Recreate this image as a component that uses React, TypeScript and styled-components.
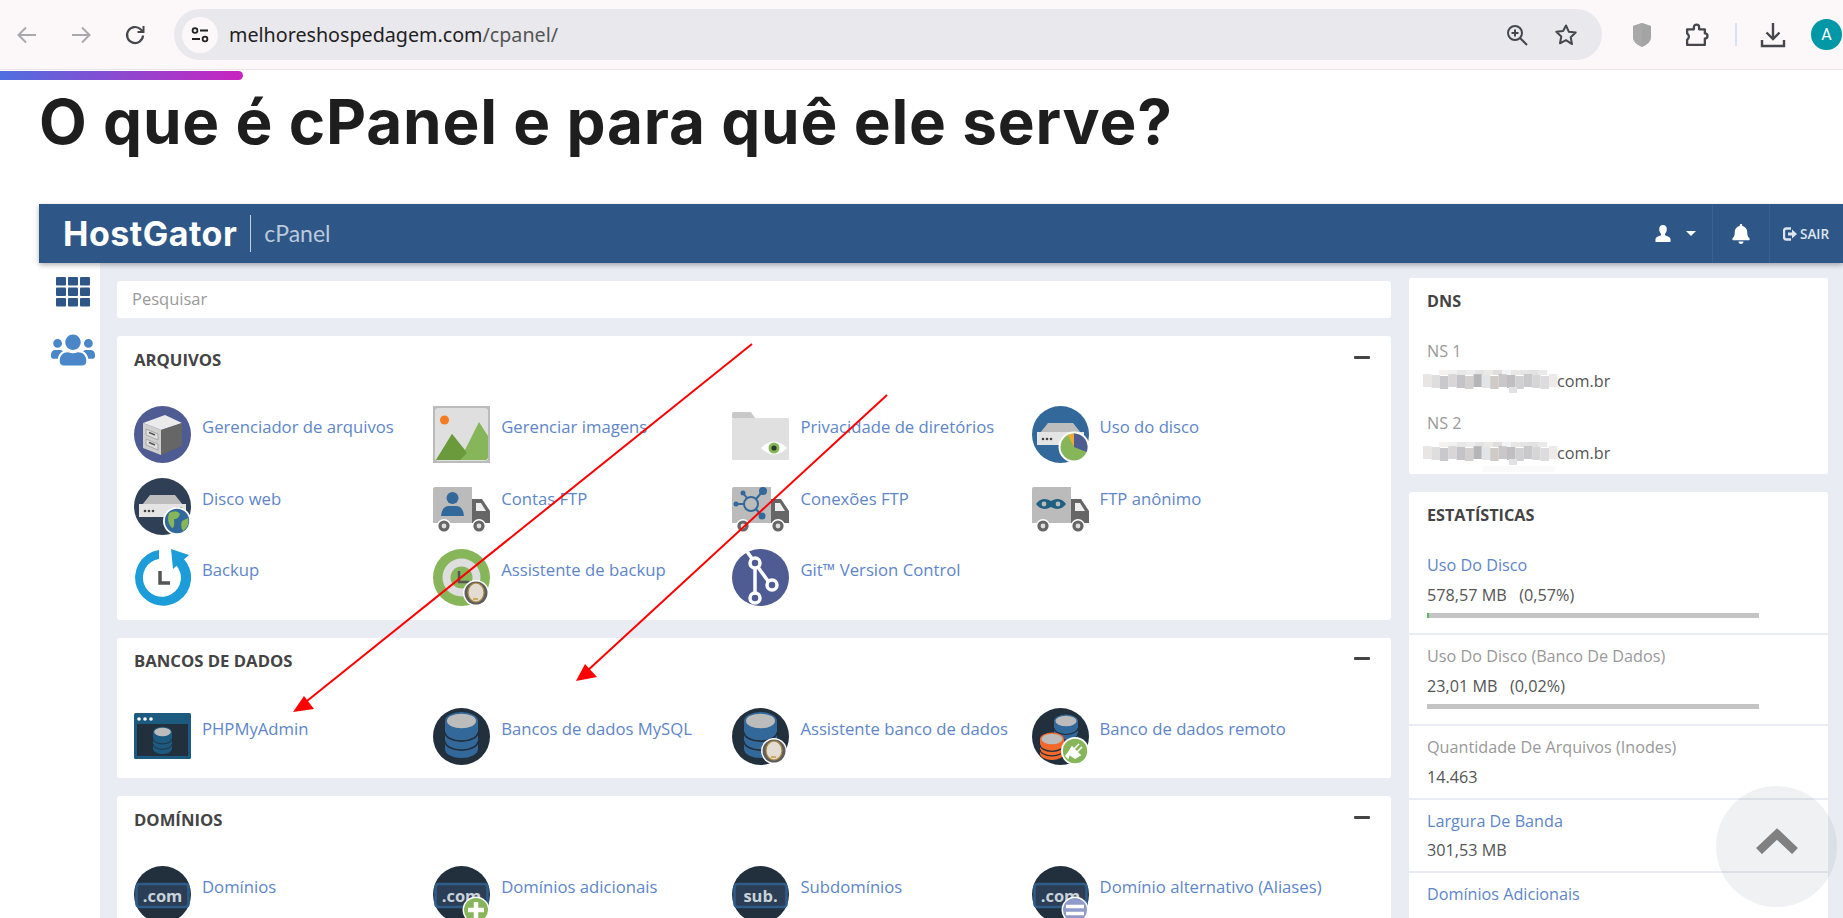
import React from "react";
import styled, { createGlobalStyle } from "styled-components";
import { FaUsers, FaBell } from "react-icons/fa";

const GlobalStyle = createGlobalStyle`
  html, body {
    margin: 0;
    padding: 0;
    background: #fff;
    font-family: "Open Sans", "Liberation Sans", sans-serif;
  }
`;

const DARK = "#222f3c";
const BLUE = "#33689a";
const NAVY = "#2e5788";
const PURPLE = "#4f5b93";
const GREEN = "#87b55a";

/* ---------- small drawing helpers for the cPanel icons ---------- */

type DbProps = { x: number; y: number; w: number; h: number; color?: string; top?: string; line?: string };

const Db = ({ x, y, w, h, color = BLUE, top = "#bcbcbc", line = DARK }: DbProps) => {
  const ry = w * 0.27;
  const b = y + h - ry;
  const s1 = y + (h - ry) * 0.4;
  const s2 = y + (h - ry) * 0.72;
  return (
    <g>
      <path d={`M${x} ${y}V${b}A${w / 2} ${ry} 0 0 0 ${x + w} ${b}V${y}Z`} fill={color} />
      <path d={`M${x} ${s1}A${w / 2} ${ry} 0 0 0 ${x + w} ${s1}`} fill="none" stroke={line} strokeWidth={w * 0.05} />
      <path d={`M${x} ${s2}A${w / 2} ${ry} 0 0 0 ${x + w} ${s2}`} fill="none" stroke={line} strokeWidth={w * 0.05} />
      <ellipse cx={x + w / 2} cy={y} rx={w / 2} ry={ry} fill={color} />
      <ellipse cx={x + w / 2} cy={y} rx={w / 2 - w * 0.06} ry={ry - w * 0.05} fill={top} />
    </g>
  );
};

const Server = () => (
  <g>
    <path d="M8 27 16 17H41L49 27Z" fill="#bdbdbd" />
    <rect x="5" y="26" width="47" height="13" fill="#e4e4e4" />
    <circle cx="11" cy="33" r="1.3" fill="#444" />
    <circle cx="15" cy="33" r="1.3" fill="#444" />
    <circle cx="19" cy="33" r="1.3" fill="#444" />
    <circle cx="43" cy="30" r="1.3" fill="#d9534f" />
    <circle cx="47" cy="30" r="1.3" fill={GREEN} />
  </g>
);

const Headset = ({ cx, cy, r = 12 }: { cx: number; cy: number; r?: number }) => (
  <g>
    <circle cx={cx} cy={cy} r={r} fill="#fff" />
    <circle cx={cx} cy={cy} r={r - 1.5} fill="#5e5e5e" />
    <ellipse cx={cx} cy={cy - 0.5} rx={r - 5} ry={r - 3.5} fill="#e2dcd2" stroke="#b08a3c" strokeWidth="1.2" />
    <path d={`M${cx - 3} ${cy + 6}h5`} stroke="#c79a3a" strokeWidth="1.5" />
  </g>
);

const Truck = ({ children }: { children: React.ReactNode }) => (
  <g>
    <path d="M0 11a2 2 0 0 1 2-2H39V45H0Z" fill="#bbb" />
    <path d="M39 21H49L57 33V45H39Z" fill="#666" />
    <path d="M43 25H48L53 33H43Z" fill="#eee" />
    <circle cx="11" cy="48" r="7" fill="#fff" />
    <circle cx="11" cy="48" r="5.6" fill="#666" />
    <circle cx="11" cy="48" r="2.4" fill="#ddd" />
    <circle cx="46" cy="48" r="7" fill="#fff" />
    <circle cx="46" cy="48" r="5.6" fill="#666" />
    <circle cx="46" cy="48" r="2.4" fill="#ddd" />
    {children}
  </g>
);

const Com = ({ label = ".com" }: { label?: string }) => (
  <g>
    <circle cx="28.5" cy="28.5" r="28.5" fill={DARK} />
    <rect x="2.5" y="18" width="52" height="23" rx="3" fill="#2b3e55" stroke="#2f5d8a" strokeWidth="2.5" />
    <text x="28.5" y="35.5" textAnchor="middle" fontFamily="'Open Sans', sans-serif" fontWeight="700" fontSize="16.5" fill="#c9d2da">
      {label}
    </text>
  </g>
);

const icons: Record<string, React.ReactNode> = {
  files: (
    <>
      <circle cx="28.5" cy="28.5" r="28.5" fill={PURPLE} />
      <path d="M9 17 31 9 48 17 27 24Z" fill="#eaeaea" />
      <path d="M9 17 27 24V49L9 42Z" fill="#cfcfcf" />
      <path d="M27 24 48 17V40L27 49Z" fill="#666" />
      <path d="M12 23 24 28V34L12 29ZM12 33 24 38V44L12 39Z" fill="#e0e0e0" stroke="#a8a8a8" />
      <path d="M15 26.5 21 29M15 36.5 21 39" stroke="#555" strokeWidth="1.4" />
    </>
  ),
  images: (
    <>
      <rect width="57" height="57" fill="#bbb" />
      <rect x="2" y="2" width="53" height="53" rx="3" fill="#dfdfdf" />
      <circle cx="11.5" cy="14" r="4.5" fill="#f47b20" />
      <path d="M3 54 19 28 32 44 46 16 55 30V52L53 54Z" fill={GREEN} />
      <path d="M3 54 19 28 34 47 27 54Z" fill="#6b9a3c" />
    </>
  ),
  folder: (
    <>
      <path d="M0 8a2 2 0 0 1 2-2H19L23 12H0Z" fill="#c9c9c9" />
      <rect y="12" width="57" height="42" rx="1.5" fill="#e0e0e0" />
      <path d="M29 42Q42 29 55 42 42 55 29 42Z" fill="#fff" />
      <circle cx="42" cy="42" r="5.5" fill={GREEN} />
      <circle cx="42" cy="42" r="2.6" fill="#2d3a28" />
    </>
  ),
  disk: (
    <>
      <circle cx="28.5" cy="28.5" r="28.5" fill={BLUE} />
      <Server />
      <circle cx="42" cy="41" r="15.5" fill="#fff" />
      <circle cx="42" cy="41" r="13.5" fill={GREEN} />
      <path d="M42 41V27.5A13.5 13.5 0 0 1 54.5 46Z" fill={PURPLE} />
      <path d="M42 41 36 29A13.5 13.5 0 0 1 42 27.5Z" fill="#eea92f" />
    </>
  ),
  web: (
    <>
      <circle cx="28.5" cy="28.5" r="28.5" fill="#2f3f56" />
      <Server />
      <circle cx="43" cy="43" r="14" fill="#fff" />
      <circle cx="43" cy="43" r="12.2" fill={BLUE} />
      <path d="M35 35Q43 31 46 36 44 42 40 41 41 50 38 50 32 44 35 35ZM48 43 54 40Q56 48 49 53 46 48 48 43Z" fill={GREEN} />
    </>
  ),
  ftpUser: (
    <Truck>
      <circle cx="19.5" cy="20" r="6" fill={BLUE} />
      <path d="M8 38Q9 28 16 28H23Q30 28 31 38Z" fill={BLUE} />
    </Truck>
  ),
  ftpConn: (
    <Truck>
      <g fill="none" stroke={BLUE} strokeWidth="2">
        <circle cx="19" cy="26" r="7" />
        <path d="M12 26H5M24 21 30 14M24 31 29 37M15 20 11 15" />
      </g>
      <circle cx="4" cy="26" r="2.5" fill={BLUE} />
      <circle cx="31" cy="13" r="4" fill={BLUE} />
      <circle cx="30" cy="38" r="3.5" fill={BLUE} />
      <circle cx="11" cy="15" r="2.5" fill={BLUE} />
    </Truck>
  ),
  ftpAnon: (
    <Truck>
      <path d="M4 26Q10 18 19 23 28 18 34 26 28 34 19 29 10 34 4 26Z" fill="#1f5f7f" />
      <circle cx="12" cy="26" r="2.4" fill="#bbb" />
      <circle cx="26" cy="26" r="2.4" fill="#bbb" />
    </Truck>
  ),
  backup: (
    <>
      <path d="M25 1A28 28 0 1 0 49 9L42 16A19 19 0 1 1 25 10Z" fill="#1c9cd8" />
      <path d="M37 0 55 6 39 20Z" fill="#1c9cd8" />
      <path d="M26 22V34H36" fill="none" stroke="#555" strokeWidth="3.5" />
    </>
  ),
  backupWizard: (
    <>
      <circle cx="28.5" cy="28.5" r="28.5" fill={GREEN} />
      <circle cx="28.5" cy="28.5" r="19" fill="#dedede" />
      <circle cx="28.5" cy="28.5" r="11" fill={GREEN} />
      <path d="M26 22V33H36" fill="none" stroke="#555" strokeWidth="2.5" />
      <Headset cx={43} cy={44} r={13} />
    </>
  ),
  git: (
    <>
      <circle cx="28.5" cy="28.5" r="28.5" fill={PURPLE} />
      <path d="M14 1 23 14V46M23 14 36 32" fill="none" stroke="#fff" strokeWidth="3.5" />
      <circle cx="23" cy="14" r="5" fill={PURPLE} stroke="#fff" strokeWidth="3.5" />
      <circle cx="40" cy="36" r="5" fill={PURPLE} stroke="#fff" strokeWidth="3.5" />
      <circle cx="23" cy="49" r="5" fill={PURPLE} stroke="#fff" strokeWidth="3.5" />
    </>
  ),
  phpmyadmin: (
    <>
      <rect width="57" height="46" y="5" rx="1.5" fill="#1d5a80" />
      <circle cx="5" cy="11" r="1.8" fill="#fff" />
      <circle cx="11" cy="11" r="1.8" fill="#fff" />
      <circle cx="17" cy="11" r="1.8" fill="#fff" />
      <rect x="3" y="16" width="51" height="32" fill={DARK} />
      <Db x={19} y={24} w={19} h={22} color="#1d5a80" />
    </>
  ),
  mysql: (
    <>
      <circle cx="28.5" cy="28.5" r="28.5" fill={DARK} />
      <Db x={12} y={13} w={33} h={37} />
    </>
  ),
  dbWizard: (
    <>
      <circle cx="28.5" cy="28.5" r="28.5" fill={DARK} />
      <Db x={12} y={13} w={33} h={37} />
      <Headset cx={42} cy={43} r={13} />
    </>
  ),
  dbRemote: (
    <>
      <circle cx="28.5" cy="28.5" r="28.5" fill={DARK} />
      <Db x={22} y={13} w={24} h={24} />
      <Db x={8} y={31} w={24} h={21} color="#f2692a" />
      <circle cx="43" cy="43" r="14" fill="#fff" />
      <circle cx="43" cy="43" r="12.2" fill={GREEN} />
      <path d="M47 36 42 41M50 39 45 44M40 39 48 47 43 50 37 46 36 50 34 48 37 44Z" fill="#fff" stroke="#fff" strokeWidth="1.6" />
    </>
  ),
  dom: <Com />,
  domAdd: (
    <>
      <Com />
      <circle cx="43" cy="44" r="13.5" fill="#fff" />
      <circle cx="43" cy="44" r="12" fill={GREEN} />
      <path d="M43 36V52M35 44H51" stroke="#fff" strokeWidth="4.5" />
    </>
  ),
  domSub: <Com label="sub." />,
  domAlias: (
    <>
      <Com />
      <circle cx="43" cy="44" r="13.5" fill="#fff" />
      <circle cx="43" cy="44" r="12" fill="#8f9bc8" />
      <path d="M34 40.5H52M34 47.5H52" stroke="#fff" strokeWidth="3.5" />
    </>
  ),
};

const sections = [
  {
    title: "ARQUIVOS",
    items: [
      ["files", "Gerenciador de arquivos"],
      ["images", "Gerenciar imagens"],
      ["folder", "Privacidade de diretórios"],
      ["disk", "Uso do disco"],
      ["web", "Disco web"],
      ["ftpUser", "Contas FTP"],
      ["ftpConn", "Conexões FTP"],
      ["ftpAnon", "FTP anônimo"],
      ["backup", "Backup"],
      ["backupWizard", "Assistente de backup"],
      ["git", "Git™ Version Control"],
    ],
  },
  {
    title: "BANCOS DE DADOS",
    items: [
      ["phpmyadmin", "PHPMyAdmin"],
      ["mysql", "Bancos de dados MySQL"],
      ["dbWizard", "Assistente banco de dados"],
      ["dbRemote", "Banco de dados remoto"],
    ],
  },
  {
    title: "DOMÍNIOS",
    items: [
      ["dom", "Domínios"],
      ["domAdd", "Domínios adicionais"],
      ["domSub", "Subdomínios"],
      ["domAlias", "Domínio alternativo (Aliases)"],
    ],
  },
];

const stats = [
  { label: "Uso Do Disco", value: "578,57 MB\u00a0\u00a0 (0,57%)", link: true, bar: 0.57 },
  { label: "Uso Do Disco (Banco De Dados)", value: "23,01 MB\u00a0\u00a0 (0,02%)", bar: 0 },
  { label: "Quantidade De Arquivos (Inodes)", value: "14.463" },
  { label: "Largura De Banda", value: "301,53 MB", link: true },
  { label: "Domínios Adicionais", value: "3 / 40%", link: true },
];

// pixelated smear over the redacted name server host
const mosaic = [
  "e8e5e2", "dedede", "c9c9cc", "d8d6d6", "c4c4c8", "d2d0cf", "b5b5b8", "e2e4e8",
  "cfcac6", "c8c6c6", "bfbfc2", "d0d0d2", "c9c9cb", "d6d6d6", "dcdcde", "ecebea",
];

const Mosaic = ({ patch }: { patch?: boolean }) => (
  <BlurSvg width="134" height="26" viewBox="0 0 134 26">
    {mosaic.map((c, i) => (
      <rect key={i} x={i * 8.4} y={6 + (i % 3)} width="8.4" height="13" fill={`#${c}`} />
    ))}
    {mosaic.slice(0, 12).map((c, i) => (
      <rect key={i} x={16 + i * 9} y={2} width="9" height="5" fill={`#${c}`} opacity={0.45} />
    ))}
    <rect x="86" y="19" width="8" height="6" fill="#e2e2e4" />
    {patch && <rect x="60" y="26" width="72" height="6" fill="#fafafa" />}
  </BlurSvg>
);

const App = () => (
  <Page>
    <GlobalStyle />
    <Toolbar>
      <NavButton>
        <svg width="24" height="24" viewBox="0 0 24 24" fill="none" stroke="#a9a9ab" strokeWidth="2">
          <path d="M21 12H4M11 4.5 3.5 12l7.5 7.5" />
        </svg>
      </NavButton>
      <NavButton>
        <svg width="24" height="24" viewBox="0 0 24 24" fill="none" stroke="#a9a9ab" strokeWidth="2">
          <path d="M3 12h17M13 4.5l7.5 7.5-7.5 7.5" />
        </svg>
      </NavButton>
      <NavButton>
        <svg width="24" height="24" viewBox="0 0 24 24" fill="none" stroke="#45474c" strokeWidth="2.2">
          <path d="M20 12.5A8 8 0 1 1 17.6 6.3L20 8.5" />
          <path d="M20.5 3V9H14.5" strokeWidth="2" />
        </svg>
      </NavButton>
      <UrlPill>
        <TuneBadge>
          <svg width="20" height="20" viewBox="0 0 20 20" fill="none" stroke="#222" strokeWidth="1.8">
            <circle cx="5" cy="5.5" r="2.4" />
            <path d="M10 5.5h8M2 14h8" />
            <circle cx="15" cy="14" r="2.4" />
          </svg>
        </TuneBadge>
        <Url>
          melhoreshospedagem.com<UrlPath>/cpanel/</UrlPath>
        </Url>
        <PillIcons>
          <svg width="24" height="24" viewBox="0 0 24 24" fill="none" stroke="#45474c" strokeWidth="2">
            <circle cx="10" cy="10" r="7" />
            <path d="M15 15l7 7M10 6.5v7M6.5 10h7" />
          </svg>
          <svg width="24" height="24" viewBox="0 0 24 24" fill="none" stroke="#45474c" strokeWidth="2" strokeLinejoin="round">
            <path d="M12 2.5l2.9 6.3 6.8.8-5 4.7 1.3 6.8L12 17.2 6 20.3l1.3-6.8-5-4.7 6.8-.8z" />
          </svg>
        </PillIcons>
      </UrlPill>
      <ExtButton $first>
        <svg width="20" height="26" viewBox="0 0 20 26">
          <path d="M10 1 19 4V15Q19 21 10 25Q1 21 1 15V4Z" fill="#b5b5b5" />
          <path d="M10 1V25Q1 21 1 15V4Z" fill="#a8a8a8" />
          <path d="M10 1 19 4V15Q19 21 10 25Z" fill="#9a9a9a" opacity=".6" />
        </svg>
      </ExtButton>
      <ExtButton>
        <svg width="25" height="25" viewBox="0 0 24 24" fill="none" stroke="#45474c" strokeWidth="2.2" strokeLinejoin="round">
          <path d="M3 7H9.5V5a2.5 2.5 0 0 1 5 0V7H20V11a2 2 0 0 1 0 5V22H3V17a3.5 3.5 0 0 0 0-6Z" />
        </svg>
      </ExtButton>
      <ToolbarDivider />
      <DownloadButton>
        <svg width="26" height="26" viewBox="0 0 26 26" fill="none" stroke="#45474c" strokeWidth="2.4">
          <path d="M13 1v15M6.5 10.5 13 17l6.5-6.5M2 18v6h22v-6" />
        </svg>
      </DownloadButton>
      <Avatar>A</Avatar>
    </Toolbar>
    <ProgressBar />

    <Article>
      <Title>O que é cPanel e para quê ele serve?</Title>
      <Frame>
        <Header>
          <Brand>
            <BrandName>HostGator</BrandName>
            <BrandProduct>cPanel</BrandProduct>
          </Brand>
          <HeaderActions>
            <UserAction>
              <svg width="16" height="17" viewBox="0 0 16 17" fill="#fff">
                <path d="M8 0c2.6 0 3.8 1.8 3.8 4.2 0 2-1 3.6-1.8 4.6v1.4c2 .9 5.5 1.7 5.5 4V17H.5v-2.8c0-2.3 3.5-3.1 5.5-4V8.800c-.8-1-1.8-2.6-1.8-4.6C4.200 1.800 5.400 0 8 0z" />
              </svg>
              <Caret />
            </UserAction>
            <BellAction>
              <FaBell size={20} color="#fff" />
            </BellAction>
            <LogoutAction>
              <svg width="14" height="14" viewBox="0 0 14 14">
                <path d="M8 1.5H3.5Q1 1.5 1 4V10Q1 12.5 3.5 12.5H8" fill="none" stroke="#dfe5ee" strokeWidth="2.4" />
                <path d="M5 5.5H9V2.5L14 7 9 11.5V8.5H5Z" fill="#dfe5ee" />
              </svg>
              SAIR
            </LogoutAction>
          </HeaderActions>
        </Header>
        <Body>
          <Rail>
            <svg width="34" height="30" viewBox="0 0 34 30" fill={NAVY}>
              {[0, 1, 2].flatMap((r) =>
                [0, 1, 2].map((c) => <rect key={`${r}${c}`} x={c * 12} y={r * 10.5} width="10" height="8.5" rx="1" />)
              )}
            </svg>
            <UsersIcon>
              <FaUsers size={44} color="#4a86c8" />
            </UsersIcon>
          </Rail>
          <Content>
            <Main>
              <Search>Pesquisar</Search>
              {sections.map((section) => (
                <Panel key={section.title}>
                  <PanelHead>
                    <PanelTitle>{section.title}</PanelTitle>
                    <Collapse />
                  </PanelHead>
                  <IconGrid>
                    {section.items.map(([icon, label]) => (
                      <Tool key={label}>
                        <svg width="57" height="57" viewBox="0 0 57 57">
                          {icons[icon]}
                        </svg>
                        <ToolLabel>{label}</ToolLabel>
                      </Tool>
                    ))}
                  </IconGrid>
                </Panel>
              ))}
            </Main>
            <Side>
              <SidePanel>
                <SideTitle>DNS</SideTitle>
                <DnsList>
                  <DnsRow>
                    <Muted>NS 1</Muted>
                    <DnsValue>
                      <Mosaic />
                      com.br
                    </DnsValue>
                  </DnsRow>
                  <DnsRow>
                    <Muted>NS 2</Muted>
                    <DnsValue>
                      <Mosaic patch />
                      com.br
                    </DnsValue>
                  </DnsRow>
                </DnsList>
              </SidePanel>
              <SidePanel>
                <SideTitle>ESTATÍSTICAS</SideTitle>
                <Stats>
                  {stats.map((s) => (
                    <StatRow key={s.label}>
                      <StatLabel $link={s.link}>{s.label}</StatLabel>
                      <StatValue>{s.value}</StatValue>
                      {s.bar !== undefined && (
                        <Bar>{s.bar > 0 && <BarFill style={{ width: `${s.bar}%` }} />}</Bar>
                      )}
                    </StatRow>
                  ))}
                </Stats>
              </SidePanel>
            </Side>
          </Content>
        </Body>
      </Frame>
    </Article>

    <Arrows width="1843" height="918" viewBox="0 0 1843 918">
      <path d="M752 344 302 705" stroke="#f00" strokeWidth="2" />
      <path d="M293 712 304 696 314 709Z" fill="#f00" />
      <path d="M887 395 586 672" stroke="#f00" strokeWidth="2" />
      <path d="M576 681 585 664 597 677Z" fill="#f00" />
    </Arrows>

    <BackToTop>
      <svg width="42" height="26" viewBox="0 0 42 26" fill="none" stroke="#808080" strokeWidth="8.5">
        <path d="M3 23 21 6 39 23" />
      </svg>
    </BackToTop>
  </Page>
);

const Page = styled.div`
  position: relative;
  width: 1843px;
  height: 918px;
  overflow: hidden;
  background: #fff;
`;

const Toolbar = styled.div`
  display: flex;
  align-items: center;
  height: 69px;
  background: #fcf7f8;
  border-bottom: 1px solid #ebe4e6;
`;

const NavButton = styled.div`
  display: flex;
  justify-content: center;
  width: 54px;
`;

const UrlPill = styled.div`
  display: flex;
  align-items: center;
  flex: none;
  width: 1428px;
  height: 51px;
  margin-left: 12px;
  padding: 0 24px 0 8px;
  box-sizing: border-box;
  border-radius: 26px;
  background: #e9e8ed;
`;

const TuneBadge = styled.div`
  display: flex;
  align-items: center;
  justify-content: center;
  width: 36px;
  height: 36px;
  border-radius: 50%;
  background: #fcf7f8;
`;

const Url = styled.div`
  margin-left: 11px;
  font-family: "Noto Sans", sans-serif;
  font-size: 19.7px;
  color: #1f1f1f;
`;

const UrlPath = styled.span`
  color: #555;
`;

const PillIcons = styled.div`
  display: flex;
  gap: 25px;
  margin-left: auto;
`;

const ExtButton = styled.div<{ $first?: boolean }>`
  display: flex;
  justify-content: center;
  width: 54px;
  margin-left: ${({ $first }) => ($first ? "13px" : "0")};
`;

const ToolbarDivider = styled.div`
  width: 2px;
  height: 23px;
  margin-left: 12px;
  background: #d6e2f8;
`;

const DownloadButton = styled.div`
  display: flex;
  justify-content: center;
  width: 50px;
  margin-left: 11px;
`;

const Avatar = styled.div`
  display: flex;
  align-items: center;
  justify-content: center;
  width: 31px;
  height: 31px;
  margin-left: 13px;
  border-radius: 50%;
  background: #0097a7;
  color: #fff;
  font-family: "Roboto", sans-serif;
  font-size: 16px;
`;

const ProgressBar = styled.div`
  position: absolute;
  top: 71px;
  left: 0;
  width: 243px;
  height: 9px;
  border-radius: 0 5px 5px 0;
  background: linear-gradient(90deg, #4f6ee0, #c923c0);
`;

const Article = styled.div`
  padding-left: 39px;
`;

const Title = styled.h1`
  height: 134px;
  margin: 0;
  font-family: "Inter", sans-serif;
  font-size: 62px;
  font-weight: 700;
  letter-spacing: 0.8px;
  line-height: 104px;
  color: #1e1e1e;
`;

const Frame = styled.div`
  background: #fff;
`;

const Header = styled.header`
  position: relative;
  z-index: 1;
  display: flex;
  align-items: stretch;
  justify-content: space-between;
  height: 59px;
  background: ${NAVY};
  box-shadow: 0 2px 5px rgba(0, 0, 0, 0.3);
`;

const Brand = styled.div`
  display: flex;
  align-items: center;
  padding-left: 24px;
`;

const BrandName = styled.div`
  padding-right: 13px;
  font-family: "Inter", sans-serif;
  font-size: 34px;
  font-weight: 700;
  letter-spacing: 0.5px;
  color: #fff;
`;

const BrandProduct = styled.div`
  padding-left: 13px;
  border-left: 1px solid #c5d0e0;
  font-family: "Lato", sans-serif;
  font-size: 23px;
  line-height: 37px;
  color: #bcc9dc;
`;

const HeaderActions = styled.div`
  display: flex;
  align-items: stretch;
`;

const UserAction = styled.div`
  display: flex;
  align-items: center;
  gap: 15px;
  padding-right: 16px;
`;

const Caret = styled.div`
  width: 0;
  height: 0;
  border-left: 5px solid transparent;
  border-right: 5px solid transparent;
  border-top: 5px solid #fff;
`;

const BellAction = styled.div`
  display: flex;
  align-items: center;
  justify-content: center;
  width: 57px;
  border-left: 1px solid #3a6190;
  box-sizing: border-box;
`;

const LogoutAction = styled.div`
  display: flex;
  align-items: center;
  gap: 3px;
  width: 74px;
  padding-left: 13px;
  box-sizing: border-box;
  border-left: 1px solid #3a6190;
  font-size: 13.5px;
  font-weight: 600;
  color: #dfe5ee;
`;

const Body = styled.div`
  display: flex;
  height: 655px;
`;

const Rail = styled.nav`
  display: flex;
  flex: none;
  flex-direction: column;
  align-items: center;
  width: 61px;
  padding: 14px 0 0 6px;
  box-sizing: border-box;
`;

const UsersIcon = styled.div`
  display: flex;
  margin-top: 21px;
`;

const Content = styled.div`
  display: flex;
  flex: 1;
  gap: 18px;
  padding: 15px 15px 0 17px;
  overflow: hidden;
  background: #e9edf3;
`;

const Main = styled.main`
  display: flex;
  flex: none;
  flex-direction: column;
  gap: 18px;
  width: 1274px;
  padding-top: 3px;
  box-sizing: border-box;
`;

const Search = styled.div`
  flex: none;
  height: 37px;
  padding-left: 15px;
  border-radius: 3px;
  background: #fff;
  font-size: 16.5px;
  line-height: 35px;
  color: #999;
`;

const Panel = styled.section`
  flex: none;
  padding: 0 17px 15px;
  border-radius: 3px;
  background: #fff;
`;

const PanelHead = styled.div`
  display: flex;
  align-items: center;
  justify-content: space-between;
  height: 46px;
  margin-bottom: 24px;
`;

const PanelTitle = styled.h2`
  margin: 0;
  font-size: 16.7px;
  font-weight: 700;
  color: #444;
`;

const Collapse = styled.div`
  width: 16px;
  height: 3px;
  margin-right: 4px;
  margin-bottom: 4px;
  border-radius: 1px;
  background: #444;
`;

const IconGrid = styled.div`
  display: grid;
  grid-template-columns: repeat(4, 299.2px);
  grid-auto-rows: 71.5px;
  margin-bottom: -16px;
`;

const Tool = styled.div`
  display: flex;
  gap: 11px;
`;

const ToolLabel = styled.span`
  padding-top: 10px;
  font-size: 16.7px;
  line-height: 22px;
  color: #5e86c9;
`;

const Side = styled.aside`
  display: flex;
  flex: none;
  flex-direction: column;
  gap: 18px;
  width: 419px;
`;

const SidePanel = styled.section`
  flex: none;
  border-radius: 3px;
  background: #fff;
`;

const SideTitle = styled.h2`
  margin: 0;
  padding: 12px 18px 0;
  font-size: 16.2px;
  font-weight: 700;
  line-height: 22px;
  color: #444;
`;

const DnsList = styled.div`
  display: flex;
  flex-direction: column;
  gap: 20px;
  padding: 28px 18px 10px;
`;

const DnsRow = styled.div`
  display: flex;
  flex-direction: column;
  gap: 8px;
`;

const Muted = styled.div`
  font-size: 16.2px;
  line-height: 22px;
  color: #999;
`;

const DnsValue = styled.div`
  display: flex;
  align-items: center;
  font-size: 16.2px;
  line-height: 22px;
  color: #555;
`;

const BlurSvg = styled.svg`
  flex: none;
  margin: -2px 0 -2px -4px;
  overflow: visible;
`;

const Stats = styled.div`
  padding-top: 18px;
`;

const StatRow = styled.div`
  padding: 10px 18px 10px;
  border-bottom: 2px solid #e9edf3;
`;

const StatLabel = styled.div<{ $link?: boolean }>`
  font-size: 16.2px;
  line-height: 22px;
  color: ${({ $link }) => ($link ? "#5e86c9" : "#999")};
`;

const StatValue = styled.div`
  margin-top: 7.5px;
  font-size: 16.2px;
  line-height: 22px;
  color: #555;
`;

const Bar = styled.div`
  width: 332px;
  height: 5px;
  margin: 7.5px 0 5px;
  background: #c4c4c4;
`;

const BarFill = styled.div`
  height: 100%;
  min-width: 2px;
  background: #5cb85c;
`;

const Arrows = styled.svg`
  position: absolute;
  top: 0;
  left: 0;
  pointer-events: none;
`;

const BackToTop = styled.div`
  position: absolute;
  top: 786px;
  left: 1716px;
  display: flex;
  align-items: center;
  justify-content: center;
  width: 121px;
  height: 121px;
  padding-bottom: 12px;
  box-sizing: border-box;
  border-radius: 50%;
  background: rgba(40, 50, 70, 0.07);
`;

export default App;
